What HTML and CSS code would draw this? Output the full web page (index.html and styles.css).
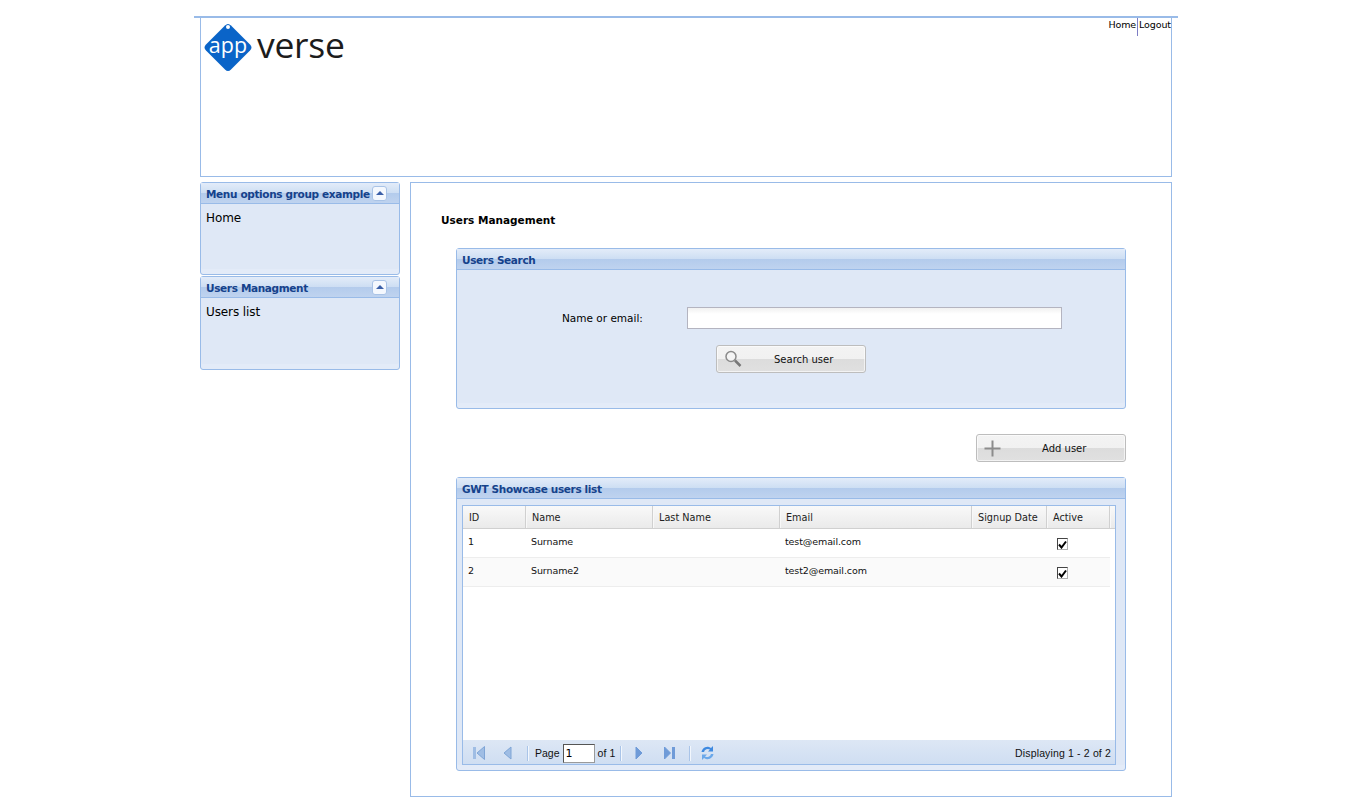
FILE: index.html
```html
<!DOCTYPE html>
<html lang="en">
<head>
<meta charset="utf-8">
<title>Users Management</title>
<link rel="stylesheet" href="styles.css">
</head>
<body>
<div class="page">
  <header class="top">
    <svg class="logo" width="150" height="56" viewBox="0 0 150 56">
      <path d="M23 5.500 Q26 2.500 29 5.500 L48 24.500 Q51 27.500 48 30.500 L29 49.500 Q26 52.500 23 49.500 L4 30.500 Q1 27.500 4 24.500 Z" fill="#0a64c8"/>
      <circle cx="26" cy="7" r="2" fill="#fff"/>
      <text class="logo-app" x="26" y="33" text-anchor="middle">app</text>
      <text class="logo-verse" x="55" y="38">verse</text>
    </svg>
    <nav class="top-links"><a class="top-link first">Home</a><a class="top-link">Logout</a></nav>
  </header>
  <div class="columns">
    <aside class="side">
      <section class="panel side-panel">
        <div class="panel-head"><span>Menu options group example</span><button class="collapse"><i class="tri"></i></button></div>
        <div class="side-body">Home</div>
      </section>
      <section class="panel side-panel">
        <div class="panel-head"><span>Users Managment</span><button class="collapse"><i class="tri"></i></button></div>
        <div class="side-body">Users list</div>
      </section>
    </aside>
    <main class="main">
      <h1 class="title">Users Management</h1>
      <section class="panel search">
        <div class="panel-head"><span>Users Search</span></div>
        <div class="search-body">
          <div class="search-row">
            <label class="search-label">Name or email:</label>
            <input class="search-input" type="text">
          </div>
          <button class="btn btn-search">
            <svg class="btn-icon" width="18" height="18" viewBox="0 0 18 18"><circle cx="7" cy="6.500" r="5" fill="#f4f4f4" stroke="#8a8a8a" stroke-width="1.500"/><path d="M11 10.500 L16.500 16" stroke="#777" stroke-width="2.500"/></svg>
            <span class="btn-text">Search user</span>
          </button>
        </div>
      </section>
      <div class="add-row">
        <button class="btn btn-add">
          <svg class="btn-icon" width="17" height="17" viewBox="0 0 17 17"><path d="M8.500 0.500 V16.500 M0.500 8.500 H16.500" stroke="#8c8c8c" stroke-width="2"/></svg>
          <span class="btn-text">Add user</span>
        </button>
      </div>
      <section class="panel list">
        <div class="panel-head"><span>GWT Showcase users list</span></div>
        <div class="list-body">
          <div class="grid">
            <div class="grid-head">
              <div class="hc">ID</div><div class="hc">Name</div><div class="hc">Last Name</div><div class="hc">Email</div><div class="hc">Signup Date</div><div class="hc">Active</div><div class="hc hc-end"></div>
            </div>
            <div class="grid-rows">
              <div class="row">
                <div class="c">1</div><div class="c">Surname</div><div class="c"></div><div class="c">test@email.com</div><div class="c"></div><div class="c c-check"><span class="check"><svg width="9" height="9" viewBox="0 0 9 9"><path d="M1 4.500 L3.500 7.500 L8 1.500" fill="none" stroke="#000" stroke-width="2"/></svg></span></div>
              </div>
              <div class="row row-alt">
                <div class="c">2</div><div class="c">Surname2</div><div class="c"></div><div class="c">test2@email.com</div><div class="c"></div><div class="c c-check"><span class="check"><svg width="9" height="9" viewBox="0 0 9 9"><path d="M1 4.500 L3.500 7.500 L8 1.500" fill="none" stroke="#000" stroke-width="2"/></svg></span></div>
              </div>
            </div>
            <div class="pager">
              <svg class="pi pi-first" width="12" height="14" viewBox="0 0 12 14"><path d="M0 1h3v12H0z" fill="#9fbde4"/><path d="M11.500 0.500 V13.500 L4 7 Z" fill="#9fbde4" stroke="#7fa5d6"/></svg>
              <svg class="pi pi-prev" width="9" height="14" viewBox="0 0 9 14"><path d="M8 1 V13 L1 7 Z" fill="#9fbde4" stroke="#7fa5d6"/></svg>
              <i class="sep sep-a"></i>
              <span class="pg-text pg-page">Page</span>
              <input class="pg-input" type="text" value="1">
              <span class="pg-text pg-of">of 1</span>
              <i class="sep sep-b"></i>
              <svg class="pi pi-next" width="8" height="14" viewBox="0 0 8 14"><path d="M1 1 V13 L7 7 Z" fill="#6f9bd8" stroke="#6f9bd8"/></svg>
              <svg class="pi pi-last" width="11" height="14" viewBox="0 0 11 14"><path d="M0.500 1 V13 L6.500 7 Z" fill="#6f9bd8" stroke="#6f9bd8"/><path d="M8 1h3v12H8z" fill="#6f9bd8"/></svg>
              <i class="sep sep-c"></i>
              <svg class="pi pi-refresh" width="15" height="16" viewBox="0 0 15 16"><path d="M1.500 7 A6 6 0 0 1 11 3 L13 1 V6.500 H8 L10 4.500 A4 4 0 0 0 4 7 Z" fill="#3f8ae0"/><path d="M13.500 9 A6 6 0 0 1 4 13 L2 15 V9.500 H7 L5 11.500 A4 4 0 0 0 11 9 Z" fill="#6aa8ea"/></svg>
              <span class="pg-text pg-display">Displaying 1 - 2 of 2</span>
            </div>
          </div>
        </div>
      </section>
    </main>
  </div>
</div>
</body>
</html>
```
FILE: styles.css
```css
* { box-sizing: border-box; }
html, body { margin: 0; padding: 0; background: #fff; }
body { font-family: "DejaVu Sans", Tahoma, sans-serif; color: #000; overflow: hidden; }

.page { width: 984px; margin: 16px 0 0 194px; border-top: 2px solid #99bbe8; padding: 0 6px; }

.top { position: relative; height: 159px; border: 1px solid #99bbe8; border-top: 0; padding: 2px 0 0 1px; }
.logo { display: block; }
.logo-app { font-family: "Open Sans", sans-serif; font-size: 21.500px; fill: #fff; }
.logo-verse { font-family: "Open Sans", sans-serif; font-size: 35.500px; fill: #1c1c1c; letter-spacing: -0.300px; }
.top-links { position: absolute; top: 0; right: 0; display: flex; font-family: "DejaVu Sans", sans-serif; font-size: 9.500px; letter-spacing: -0.100px; }
.top-link { display: block; height: 18px; padding-top: 1px; }
.top-link.first { border-right: 1px solid #7d7dc4; padding-right: 1px; margin-right: 1px; }

.columns { display: flex; gap: 10px; margin-top: 5px; align-items: flex-start; }
.side { width: 200px; flex: none; display: flex; flex-direction: column; gap: 1px; }
.main { width: 762px; height: 615px; border: 1px solid #99bbe8; padding: 31px 45px 0 30px; }
.title { margin: 0 0 21px; font-family: "DejaVu Sans", sans-serif; font-size: 10.500px; line-height: 13px; font-weight: bold; }

.panel { background: #dfe8f6; border: 1px solid #99bbe8; border-radius: 3px; box-shadow: inset 0 -5px 0 #e3ebf8; }
.panel-head { height: 21px; display: flex; align-items: center; justify-content: space-between; padding: 1px 0 0 5px; border-bottom: 1px solid #99bbe8; background: linear-gradient(#e3ecf9 0, #cddef3 50%, #b3cbec 50%, #bfd3ef 100%); font-family: "DejaVu Sans", sans-serif; font-size: 10.500px; font-weight: bold; color: #15428b; letter-spacing: -0.350px; white-space: nowrap; }

.side-panel { height: 93px; }
.side-panel + .side-panel { height: 94px; }
.collapse { flex: none; width: 15px; height: 15px; margin: -1px 12px 0 0; padding: 0; border: 1px solid #a9c3e6; border-radius: 3px; background: #f4f8fe; display: flex; align-items: center; justify-content: center; }
.tri { display: block; width: 0; height: 0; border: 4px solid transparent; border-top: 0; border-bottom: 4px solid #3a5fa8; }
.side-body { padding: 6px 5px; font-family: "DejaVu Sans", sans-serif; font-size: 12px; line-height: 16px; letter-spacing: -0.100px; }

.search { width: 670px; height: 161px; margin-left: 15px; }
.search-body { padding: 37px 0 0 0; }
.search-row { display: flex; align-items: center; height: 22px; padding-left: 105px; }
.search-label { width: 125px; font-family: "DejaVu Sans", sans-serif; font-size: 10.500px; }
.search-input { width: 375px; height: 22px; margin: 0; padding: 0 4px; border: 1px solid #b4b4c0; background: linear-gradient(#f1f1f1, #fff 6px); }

.btn { display: flex; align-items: center; width: 150px; height: 28px; padding: 0; border: 1px solid #bdbdbd; border-radius: 3px; background: linear-gradient(#f3f3f3 0, #f1f1f1 50%, #dcdcdc 50%, #e0e0e0 100%); box-shadow: inset 0 0 0 1px rgba(255, 255, 255, 0.600); color: #111; }
.btn-search { margin: 16px 0 0 259px; }
.btn-icon { flex: none; }
.btn-text { font-family: "DejaVu Sans", sans-serif; font-size: 10px; }
.btn-search .btn-icon { margin-left: 7px; }
.btn-search .btn-text { margin-left: 32px; margin-top: 1px; }
.btn-add .btn-icon { margin-left: 7px; }
.btn-add .btn-text { margin-left: 41px; margin-top: 1px; }

.add-row { width: 670px; margin-left: 15px; display: flex; justify-content: flex-end; margin-top: 25px; }

.list { width: 670px; height: 294px; margin: 15px 0 0 15px; }
.list-body { padding: 6px 5px 0; }
.grid { width: 654px; height: 260px; border: 1px solid #99bbe8; background: #fff; display: flex; flex-direction: column; }
.grid-head, .row { display: grid; grid-template-columns: 63px 127px 127px 192px 75px 63px; }
.grid-head { grid-template-columns: 63px 127px 127px 192px 75px 63px 1fr; height: 23px; border-bottom: 1px solid #d0d0d0; background: linear-gradient(#f9f9f9, #eaeaea); }
.hc { border-right: 1px solid #d0d0d0; box-shadow: 1px 0 0 #f8f8f8; padding: 5px 0 0 6px; font-family: "DejaVu Sans", sans-serif; font-size: 9.700px; line-height: 13px; color: #222; }
.hc-end { border-right: 0; box-shadow: none; padding: 0; }
.grid-rows { flex: 1; }
.row { width: 647px; height: 29px; border-bottom: 1px solid #ededed; }
.row-alt { background: #fafafa; }
.c { padding: 6px 0 0 5px; font-family: "DejaVu Sans", sans-serif; font-size: 9.500px; letter-spacing: -0.100px; line-height: 13px; color: #111; }
.c-check { padding: 9px 0 0 10px; }
.check { display: flex; align-items: center; justify-content: center; width: 11px; height: 12px; background: #fff; border: 1px solid #b0b0b0; border-top-color: #444; border-left-color: #444; }

.pager { height: 24px; padding-top: 2px; display: flex; align-items: center; background: linear-gradient(#dde7f5, #cfdef2); }
.pi { flex: none; }
.pi-first { margin-left: 10px; }
.pi-prev { margin-left: 18px; }
.sep { display: block; flex: none; width: 1px; height: 15px; background: #f2f7fd; border-left: 1px solid #a9c4e8; box-sizing: content-box; }
.sep-a { margin-left: 15px; }
.pg-text { font-family: "Liberation Sans", sans-serif; font-size: 10.500px; color: #111; white-space: nowrap; }
.pg-page { margin-left: 6px; }
.pg-input { width: 32px; height: 19px; margin: 0 0 0 3px; padding: 0 0 0 2px; border: 1px solid #9a9a9a; border-top-color: #555; border-left-color: #555; background: #fff; font-family: "DejaVu Sans", sans-serif; font-size: 11px; }
.pg-of { margin-left: 3px; letter-spacing: 0.100px; }
.sep-b { margin-left: 5px; }
.pi-next { margin-left: 13px; }
.pi-last { margin-left: 21px; }
.sep-c { margin-left: 14px; }
.pi-refresh { margin-left: 9px; }
.pg-display { margin-left: auto; margin-right: 4px; letter-spacing: 0.150px; }
```
